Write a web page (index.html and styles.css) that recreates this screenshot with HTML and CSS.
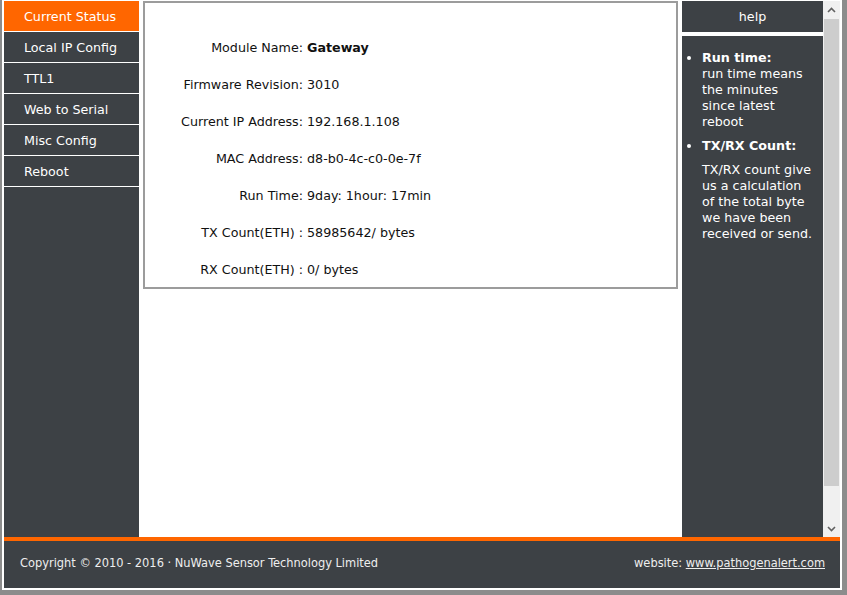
FILE: index.html
```html
<!DOCTYPE html>
<html lang="en">
<head>
  <meta charset="UTF-8" />
  <title>Current Status</title>
  <link rel="stylesheet" href="styles.css">
</head>
<body>
  <div class="frame">
    <div class="top">
      <ul class="nav">
        <li class="active">Current Status</li>
        <li>Local IP Config</li>
        <li>TTL1</li>
        <li>Web to Serial</li>
        <li>Misc Config</li>
        <li>Reboot</li>
      </ul>
      <div class="main">
        <div class="status">
          <div class="row"><span class="label">Module Name:</span><span class="value"><b>Gateway</b></span></div>
          <div class="row"><span class="label">Firmware Revision:</span><span class="value">3010</span></div>
          <div class="row"><span class="label">Current IP Address:</span><span class="value">192.168.1.108</span></div>
          <div class="row"><span class="label">MAC Address:</span><span class="value">d8-b0-4c-c0-0e-7f</span></div>
          <div class="row"><span class="label">Run Time:</span><span class="value">9day: 1hour: 17min</span></div>
          <div class="row"><span class="label">TX Count(ETH) :</span><span class="value">58985642/ bytes</span></div>
          <div class="row"><span class="label">RX Count(ETH) :</span><span class="value">0/ bytes</span></div>
        </div>
      </div>
      <div class="help">
        <div class="help-title">help</div>
        <div class="help-body">
          <ul>
            <li><b>Run time:</b><br>run time means the minutes since latest reboot</li>
            <li><b>TX/RX Count:</b>
              <p>TX/RX count give us a calculation of the total byte we have been received or send.</p>
            </li>
          </ul>
        </div>
      </div>
      <div class="scrollbar">
        <div class="arrow">
          <svg width="9" height="6" viewBox="0 0 9 6"><polyline points="1,5 4.5,1.5 8,5" fill="none" stroke="#606060" stroke-width="1.6"/></svg>
        </div>
        <div class="track"><div class="thumb"></div></div>
        <div class="arrow">
          <svg width="9" height="6" viewBox="0 0 9 6"><polyline points="1,1 4.5,4.5 8,1" fill="none" stroke="#606060" stroke-width="1.6"/></svg>
        </div>
      </div>
    </div>
    <div class="footer">
      <span>Copyright &copy; 2010 - 2016 &middot; NuWave Sensor Technology Limited</span>
      <span>website: <a href="#">www.pathogenalert.com</a></span>
    </div>
  </div>
</body>
</html>
```

FILE: styles.css
```css
body {
  margin: 0;
  background: #8c8c8c;
  font-family: 'DejaVu Sans', Verdana, sans-serif;
  font-size: 12.7px;
}
.frame {
  width: 836px;
  height: 587px;
  margin-left: 2px;
  padding: 1px 2px 2px 2px;
  background: #fff;
}
.top {
  display: flex;
  height: 536px;
}
.nav {
  list-style: none;
  margin: 0;
  padding: 0;
  width: 135px;
  background: #3d4145;
}
.nav li {
  height: 30px;
  line-height: 31px;
  padding-left: 20px;
  color: #fff;
  border-bottom: 1px solid #fff;
}
.nav li.active {
  background: #ff6600;
}
.main {
  width: 535px;
  margin-left: 4px;
}
.status {
  border: 2px solid #9c9c9c;
  height: 258px;
  padding-top: 26px;
  color: #111;
}
.row {
  display: flex;
  height: 37px;
  align-items: center;
}
.label {
  width: 158px;
  text-align: right;
  padding-right: 4px;
}
.help {
  width: 141px;
  margin-left: 4px;
  display: flex;
  flex-direction: column;
  color: #fff;
}
.help-title {
  height: 31px;
  line-height: 32px;
  text-align: center;
  background: #3d4145;
  margin-bottom: 4px;
}
.help-body {
  flex: 1;
  background: #3d4145;
  padding-top: 14px;
  line-height: 16px;
}
.help-body ul {
  margin: 0;
  padding-left: 20px;
  padding-right: 10px;
}
.help-body li {
  margin-bottom: 8px;
}
.help-body p {
  margin: 8px 0 0;
}
.scrollbar {
  width: 17px;
  background: #f0f0f0;
  display: flex;
  flex-direction: column;
}
.arrow {
  height: 17px;
  display: flex;
  align-items: center;
  justify-content: center;
}
.track {
  flex: 1;
  padding: 1px 1px;
}
.thumb {
  height: 467px;
  background: #cdcdcd;
}
.footer {
  height: 43px;
  border-top: 4px solid #ff6600;
  background: #3d4145;
  color: #eee;
  display: flex;
  justify-content: space-between;
  align-items: center;
  padding: 0 15px 4px 16px;
  font-family: 'DejaVu Sans Condensed', 'DejaVu Sans', sans-serif;
  font-stretch: condensed;
  font-size: 12.7px;
}
.footer a {
  color: #eee;
}
```
